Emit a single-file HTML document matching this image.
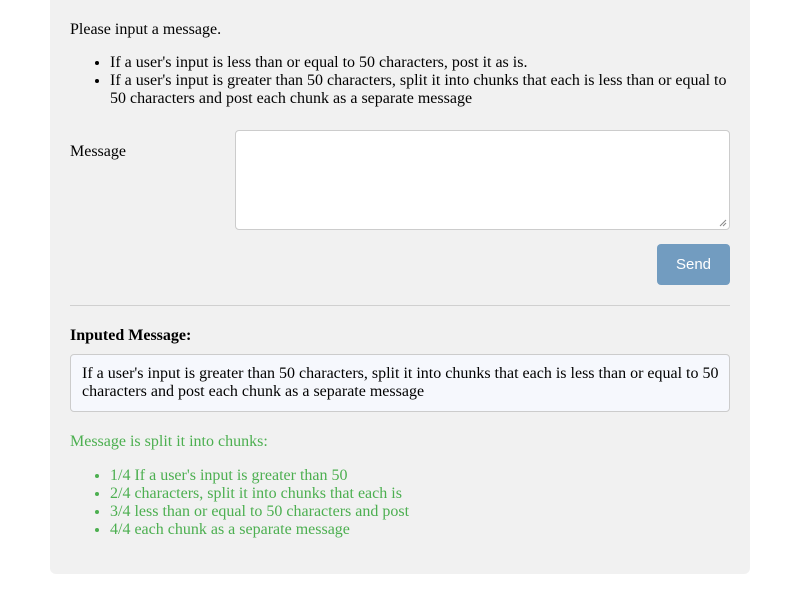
<!DOCTYPE html>
<html><head><style>
*{margin:0;padding:0;box-sizing:border-box}
body{width:800px;height:600px;background:#fff;font-family:"Liberation Serif",serif;font-size:16px;color:#000;position:relative;overflow:hidden}
.panel{position:absolute;left:50px;top:-6px;width:700px;height:580px;background:#f1f1f1;border-radius:6px}
.a{position:absolute;white-space:nowrap;line-height:18px}
ul{list-style:disc}
li{line-height:18px}
.ta{position:absolute;left:235px;top:130px;width:495px;height:100px;background:#fff;border:1px solid #ccc;border-radius:4px}
.btn{position:absolute;left:657px;top:244px;width:73px;height:41px;background:#729cc0;border-radius:4px;color:#fff;font-family:"Liberation Sans",sans-serif;font-size:15px;text-align:center;line-height:42px}
.hr{position:absolute;left:70px;top:305px;width:660px;height:1px;background:#d0d0d0}
.box{position:absolute;left:70px;top:354px;width:660px;height:58px;background:#f6f8fd;border:1px solid #ccc;border-radius:4px;padding:10px 2px 8px 11px;line-height:18px}
.g{color:#4caf50}
</style></head><body>
<div class="panel"></div>
<div class="a" style="left:70px;top:21px">Please input a message.</div>
<ul class="a" style="left:110px;top:54px;white-space:normal;width:625px">
<li>If a user's input is less than or equal to 50 characters, post it as is.</li>
<li>If a user's input is greater than 50 characters, split it into chunks that each is less than or equal to 50 characters and post each chunk as a separate message</li>
</ul>
<div class="a" style="left:70px;top:143px">Message</div>
<div class="ta"><svg style="position:absolute;right:2px;bottom:2px" width="8" height="8"><path d="M1 7L7 1M4 7L7 4" stroke="#888" stroke-width="1"/></svg></div>
<div class="btn">Send</div>
<div class="hr"></div>
<div class="a" style="left:70px;top:327px;font-weight:bold">Inputed Message:</div>
<div class="box">If a user's input is greater than 50 characters, split it into chunks that each is less than or equal to 50 characters and post each chunk as a separate message</div>
<div class="a g" style="left:70px;top:433px">Message is split it into chunks:</div>
<ul class="a g" style="left:110px;top:467px">
<li>1/4 If a user's input is greater than 50</li>
<li>2/4 characters, split it into chunks that each is</li>
<li>3/4 less than or equal to 50 characters and post</li>
<li>4/4 each chunk as a separate message</li>
</ul>
</body></html>
